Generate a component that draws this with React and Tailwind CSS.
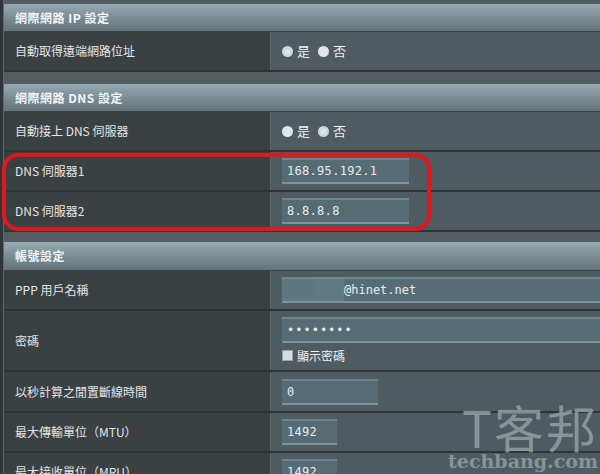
const SANS = { fontFamily: '"Noto Sans CJK TC", "Liberation Sans", sans-serif' };
const MONO = { fontFamily: '"DejaVu Sans Mono", monospace' };

function SectionHeader({ title, h = 'h-[28px]' }) {
    return (
        <div className={`${h} shrink-0 flex items-center pl-[11px] bg-gradient-to-b from-[#97aab1] to-[#627379] border-b border-[#3a4245]`}>
            <span className="text-[12px] font-bold text-[#f2f5f6] tracking-[0.5px]">{title}</span>
        </div>
    );
}

function Row({ label, children, h = 'h-[40px]' }) {
    return (
        <div className={`flex ${h} shrink-0 border-b-2 border-[#2f3537]`}>
            <div className="w-[267px] shrink-0 flex items-center pl-[11px] bg-[#3b4043] border-r border-[#5d686c]">
                <span className="text-[12px] text-[#e4e6e7]">{label}</span>
            </div>
            <div className="flex-1 flex flex-col justify-center pl-[11px] bg-[#4e5b60]">
                {children}
            </div>
        </div>
    );
}

function Radio({ on }) {
    return (
        <span className={`inline-block w-[11px] h-[11px] rounded-full bg-[#e3e6e7] ${on ? 'border-[3px] border-[#d3d8da] bg-[#6f797d]' : ''}`} />
    );
}

function YesNo({ yes }) {
    return (
        <div className="flex items-center text-[13px] text-[#eef0f1]">
            <Radio on={yes} />
            <span className="ml-[4px]">是</span>
            <span className="ml-[8px] flex"><Radio on={!yes} /></span>
            <span className="ml-[4px]">否</span>
        </div>
    );
}

function Field({ w, children }) {
    return (
        <div className={`${w} h-[26px] flex items-center pl-[5px] bg-[#566c74] border-t-2 border-b-2 border-t-[#6f848b] border-b-[#7f949a]`}>
            <span className="text-[12px] text-[#e8eef0] tracking-[0.3px]" style={MONO}>
                {children}
            </span>
        </div>
    );
}

export default function App() {
    return (
        <div className="w-[600px] h-[474px] overflow-hidden flex bg-[#30363a] relative" style={SANS}>
            <div className="w-[4px] shrink-0 border-r border-[#5f686c]" />
            <div className="flex-1 flex flex-col bg-[#545e62] pt-[4px]">
                <SectionHeader title="網際網路 IP 設定" />
                <Row label="自動取得遠端網路位址">
                    <YesNo yes />
                </Row>
                <div className="h-[12px] shrink-0" />

                <SectionHeader title="網際網路 DNS 設定" />
                <Row label="自動接上 DNS 伺服器">
                    <YesNo yes={false} />
                </Row>
                <div className="relative shrink-0">
                    <Row label="DNS 伺服器1">
                        <Field w="w-[127px]">168.95.192.1</Field>
                    </Row>
                    <Row label="DNS 伺服器2">
                        <Field w="w-[127px]">8.8.8.8</Field>
                    </Row>
                    <div className="absolute left-[-2px] top-[1px] w-[429px] h-[78px] rounded-[16px] border-4 border-[#e3161c]" />
                </div>
                <div className="h-[10px] shrink-0" />

                <SectionHeader title="帳號設定" h="h-[29px]" />
                <Row label="PPP 用戶名稱">
                    <div className="h-[26px] flex items-center bg-[#566c74] border-t-2 border-b-2 border-t-[#6f848b] border-b-[#7f949a]">
                        <div className="w-[32px] h-full bg-[#5d7880]" />
                        <div className="w-[30px] h-full bg-[#5f7a82]" />
                        <span className="text-[12px] text-[#e8eef0]" style={MONO}>@hinet.net</span>
                    </div>
                </Row>
                <Row label="密碼" h="h-[61px]">
                    <div className="h-[26px] flex items-center pl-[5px] bg-[#566c74] border-t-2 border-b-2 border-t-[#6f848b] border-b-[#7f949a]">
                        <span className="text-[12px] text-[#e8eef0] tracking-[1px]" style={MONO}>••••••••</span>
                    </div>
                    <div className="flex items-center mt-[4px]">
                        <span className="inline-block w-[11px] h-[11px] bg-[#d9dcdd] border border-[#9aa3a6]" />
                        <span className="ml-[4px] text-[12px] text-[#eef0f1]">顯示密碼</span>
                    </div>
                </Row>
                <Row label="以秒計算之閒置斷線時間" h="h-[41px]">
                    <Field w="w-[96px]">0</Field>
                </Row>
                <Row label="最大傳輸單位（MTU）">
                    <Field w="w-[55px]">1492</Field>
                </Row>
                <Row label="最大接收單位（MRU）">
                    <Field w="w-[55px]">1492</Field>
                </Row>
            </div>

            <div className="absolute right-[2px] bottom-[3px] flex flex-col items-end gap-[4px] pointer-events-none select-none">
                <span className="text-[50px] leading-[42px] text-[#98a3a7]/80 tracking-[2px]">T客邦</span>
                <span className="text-[19px] leading-[20px] font-bold text-[#98a3a7]/80" style={{ fontFamily: '"DejaVu Serif", serif' }}>techbang.com</span>
            </div>
        </div>
    );
}
